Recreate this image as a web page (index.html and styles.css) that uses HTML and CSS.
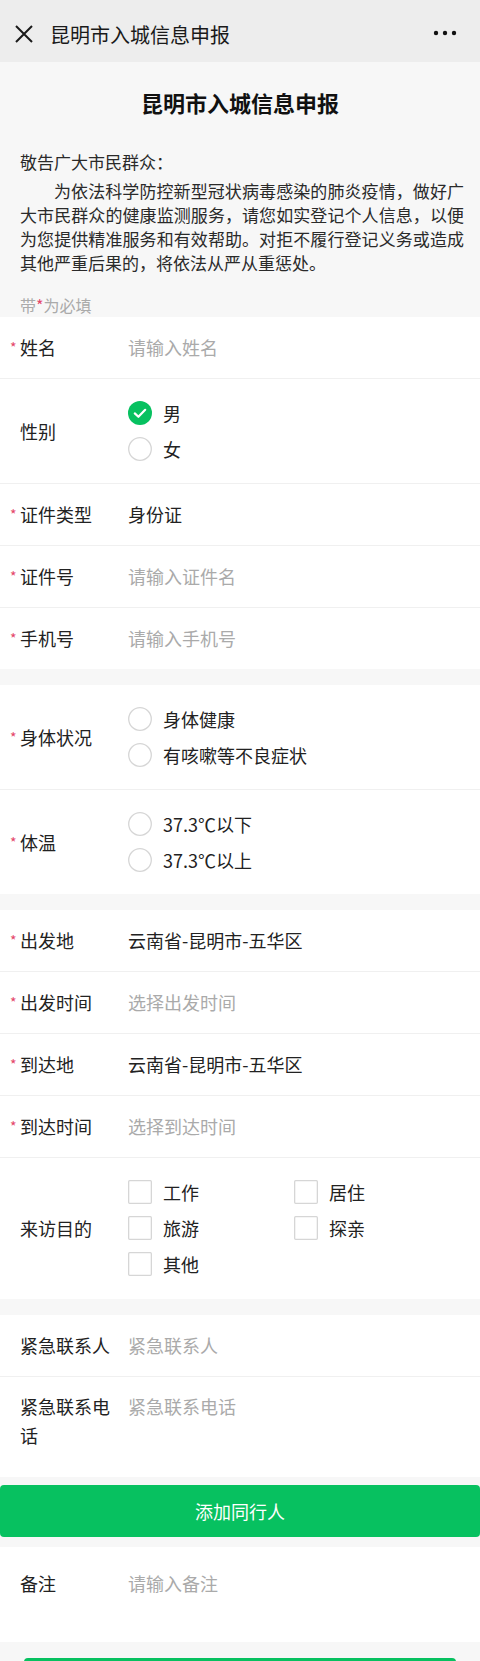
FILE: index.html
```html
<!DOCTYPE html>
<html>
<head>
	<meta charset="utf-8">
	<link rel="stylesheet" href="styles.css">
</head>
<body>
	<div class="topbar">
		<svg class="close" width="18" height="18" viewBox="0 0 18 18">
			<path d="M1 1L17 17M17 1L1 17" stroke="#1a1a1a" stroke-width="2" fill="none"/>
		</svg>
		<span class="topbar-title">昆明市入城信息申报</span>
		<svg class="more" width="24" height="6" viewBox="0 0 24 6">
			<circle cx="3" cy="3" r="2.2" fill="#111"/>
			<circle cx="12" cy="3" r="2.2" fill="#111"/>
			<circle cx="21" cy="3" r="2.2" fill="#111"/>
		</svg>
	</div>

	<div class="page">
		<h1 class="heading">昆明市入城信息申报</h1>

		<div class="notice">
			<p class="notice-title">敬告广大市民群众：</p>
			<p class="notice-body">为依法科学防控新型冠状病毒感染的肺炎疫情，做好广大市民群众的健康监测服务，请您如实登记个人信息，以便为您提供精准服务和有效帮助。对拒不履行登记义务或造成其他严重后果的，将依法从严从重惩处。</p>
		</div>

		<div class="tip">带<span class="star">*</span>为必填</div>

		<div class="group">
			<div class="row">
				<label class="label"><span class="req">*</span>姓名</label>
				<div class="field"><input class="input" type="text" placeholder="请输入姓名"></div>
			</div>
			<div class="row">
				<label class="label">性别</label>
				<div class="field options">
					<div class="option">
						<svg class="radio" width="24" height="24" viewBox="0 0 24 24">
							<circle cx="12" cy="12" r="12" fill="#07c160"/>
							<path d="M6.8 12.4L10.4 15.8L17.2 8.8" stroke="#fff" stroke-width="2.2" fill="none" stroke-linecap="round" stroke-linejoin="round"/>
						</svg>
						<span class="option-text">男</span>
					</div>
					<div class="option">
						<svg class="radio" width="24" height="24" viewBox="0 0 24 24"><circle cx="12" cy="12" r="11.3" fill="#fff" stroke="#d6d6d6" stroke-width="1.3"/></svg>
						<span class="option-text">女</span>
					</div>
				</div>
			</div>
			<div class="row">
				<label class="label"><span class="req">*</span>证件类型</label>
				<div class="field">身份证</div>
			</div>
			<div class="row">
				<label class="label"><span class="req">*</span>证件号</label>
				<div class="field"><input class="input" type="text" placeholder="请输入证件名"></div>
			</div>
			<div class="row">
				<label class="label"><span class="req">*</span>手机号</label>
				<div class="field"><input class="input" type="text" placeholder="请输入手机号"></div>
			</div>
		</div>

		<div class="group">
			<div class="row">
				<label class="label"><span class="req">*</span>身体状况</label>
				<div class="field options">
					<div class="option">
						<svg class="radio" width="24" height="24" viewBox="0 0 24 24"><circle cx="12" cy="12" r="11.3" fill="#fff" stroke="#d6d6d6" stroke-width="1.3"/></svg>
						<span class="option-text">身体健康</span>
					</div>
					<div class="option">
						<svg class="radio" width="24" height="24" viewBox="0 0 24 24"><circle cx="12" cy="12" r="11.3" fill="#fff" stroke="#d6d6d6" stroke-width="1.3"/></svg>
						<span class="option-text">有咳嗽等不良症状</span>
					</div>
				</div>
			</div>
			<div class="row">
				<label class="label"><span class="req">*</span>体温</label>
				<div class="field options">
					<div class="option">
						<svg class="radio" width="24" height="24" viewBox="0 0 24 24"><circle cx="12" cy="12" r="11.3" fill="#fff" stroke="#d6d6d6" stroke-width="1.3"/></svg>
						<span class="option-text">37.3℃以下</span>
					</div>
					<div class="option">
						<svg class="radio" width="24" height="24" viewBox="0 0 24 24"><circle cx="12" cy="12" r="11.3" fill="#fff" stroke="#d6d6d6" stroke-width="1.3"/></svg>
						<span class="option-text">37.3℃以上</span>
					</div>
				</div>
			</div>
		</div>

		<div class="group">
			<div class="row">
				<label class="label"><span class="req">*</span>出发地</label>
				<div class="field">云南省-昆明市-五华区</div>
			</div>
			<div class="row">
				<label class="label"><span class="req">*</span>出发时间</label>
				<div class="field placeholder">选择出发时间</div>
			</div>
			<div class="row">
				<label class="label"><span class="req">*</span>到达地</label>
				<div class="field">云南省-昆明市-五华区</div>
			</div>
			<div class="row">
				<label class="label"><span class="req">*</span>到达时间</label>
				<div class="field placeholder">选择到达时间</div>
			</div>
			<div class="row">
				<label class="label">来访目的</label>
				<div class="field options checks">
					<div class="option">
						<svg class="box" width="24" height="24" viewBox="0 0 24 24"><rect x="0.65" y="0.65" width="22.7" height="22.7" rx="1" fill="#fff" stroke="#d6d6d6" stroke-width="1.3"/></svg>
						<span class="option-text">工作</span>
					</div>
					<div class="option">
						<svg class="box" width="24" height="24" viewBox="0 0 24 24"><rect x="0.65" y="0.65" width="22.7" height="22.7" rx="1" fill="#fff" stroke="#d6d6d6" stroke-width="1.3"/></svg>
						<span class="option-text">居住</span>
					</div>
					<div class="option">
						<svg class="box" width="24" height="24" viewBox="0 0 24 24"><rect x="0.65" y="0.65" width="22.7" height="22.7" rx="1" fill="#fff" stroke="#d6d6d6" stroke-width="1.3"/></svg>
						<span class="option-text">旅游</span>
					</div>
					<div class="option">
						<svg class="box" width="24" height="24" viewBox="0 0 24 24"><rect x="0.65" y="0.65" width="22.7" height="22.7" rx="1" fill="#fff" stroke="#d6d6d6" stroke-width="1.3"/></svg>
						<span class="option-text">探亲</span>
					</div>
					<div class="option">
						<svg class="box" width="24" height="24" viewBox="0 0 24 24"><rect x="0.65" y="0.65" width="22.7" height="22.7" rx="1" fill="#fff" stroke="#d6d6d6" stroke-width="1.3"/></svg>
						<span class="option-text">其他</span>
					</div>
				</div>
			</div>
		</div>

		<div class="group">
			<div class="row">
				<label class="label">紧急联系人</label>
				<div class="field"><input class="input" type="text" placeholder="紧急联系人"></div>
			</div>
			<div class="row row-top">
				<label class="label">紧急联系电话</label>
				<div class="field"><input class="input" type="text" placeholder="紧急联系电话"></div>
			</div>
		</div>

		<button class="btn btn-add">添加同行人</button>

		<div class="group group-note">
			<div class="row row-note">
				<label class="label">备注</label>
				<div class="field"><input class="input" type="text" placeholder="请输入备注"></div>
			</div>
		</div>

		<button class="btn btn-submit" aria-label="submit"></button>
	</div>
</body>
</html>
```

FILE: styles.css
```css
html,body{
	margin: 0;
	padding: 0;
}
body{
	background: #f7f7f7;
	font-family: "Noto Sans CJK SC", "Noto Sans", sans-serif;
	color: #222;
}
.topbar{
	height: 62px;
	box-sizing: border-box;
	padding: 6px 23px 0 15px;
	background: #ededed;
	display: flex;
	align-items: center;
}
.topbar-title{
	flex: 1;
	margin-left: 17px;
	font-size: 20px;
	color: #1a1a1a;
}
.more{
	margin-top: -2px;
}
.heading{
	margin: 25px 0 0;
	font-size: 22px;
	line-height: 30px;
	font-weight: bold;
	text-align: center;
	color: #111;
}
.notice{
	margin-top: 33px;
	padding: 0 16px 0 20px;
	font-size: 17px;
	line-height: 24px;
	color: #2a2a2a;
}
.notice p{
	margin: 0;
}
.notice-body{
	margin-top: 5px !important;
	text-indent: 2em;
	text-align: justify;
}
.tip{
	margin: 20px 0 2px;
	padding-left: 20px;
	font-size: 16px;
	line-height: 20px;
	color: #aaa;
}
.star,
.req{
	color: #e4456a;
}
.group{
	background: #fff;
	margin-top: 16px;
}
.page > .tip + .group{
	margin-top: 0;
}
.row{
	display: flex;
	align-items: center;
	min-height: 61px;
	padding-left: 20px;
	border-bottom: 1px solid #f0f0f0;
}
.row:last-child{
	border-bottom: none;
}
.label{
	flex: 0 0 100px;
	font-size: 18px;
	line-height: 29px;
	color: #222;
}
.req{
	display: inline-block;
	width: 10px;
	margin-left: -10px;
	font-size: 14px;
	vertical-align: 2px;
	line-height: 1;
}
.field{
	flex: 1;
	margin-left: 8px;
	font-size: 18px;
	line-height: 29px;
	color: #222;
}
.placeholder{
	color: #aaa;
}
.input{
	display: block;
	width: 100%;
	height: 29px;
	padding: 0;
	border: 0;
	outline: 0;
	background: transparent;
	font: inherit;
	color: #222;
}
.input::placeholder{
	color: #aaa;
}
.options{
	padding: 16px 0;
}
.option{
	display: flex;
	align-items: center;
	height: 36px;
}
.option svg{
	flex: 0 0 24px;
}
.option-text{
	margin-left: 11px;
}
.checks{
	display: grid;
	grid-template-columns: 166px 166px;
	padding: 16px 0 17px;
}
.row-top{
	align-items: flex-start;
	padding-top: 15px;
	padding-bottom: 24px;
}
.row-note{
	align-items: flex-start;
	box-sizing: border-box;
	min-height: 95px;
	padding-top: 22px;
}
.btn{
	display: block;
	width: 100%;
	height: 52px;
	margin-top: 8px;
	border: none;
	border-radius: 4px;
	background: #07c160;
	color: #fff;
	font-family: inherit;
	font-size: 18px;
}
.group-note{
	margin-top: 10px;
}
.btn-submit{
	width: calc(100% - 48px);
	margin: 16px 24px 20px;
}
```
